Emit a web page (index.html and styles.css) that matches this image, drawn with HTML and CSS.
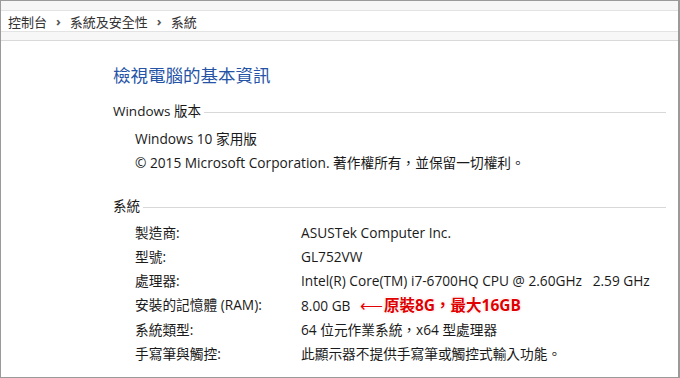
FILE: index.html
```html
<!DOCTYPE html>
<html lang="zh-Hant">
<head>
<meta charset="utf-8">
<link rel="stylesheet" href="styles.css">
</head>
<body>
<div class="frame">
  <div class="topstrip"></div>
  <div class="crumbs">
    <span>控制台</span><span class="sep">›</span><span>系統及安全性</span><span class="sep">›</span><span>系統</span>
  </div>
  <div class="substrip"></div>
  <div class="content">
    <h1 class="title">檢視電腦的基本資訊</h1>
    <div class="section-head"><span>Windows 版本</span><span class="rule"></span></div>
    <div class="edition">
      <div class="line">Windows 10 家用版</div>
      <div class="line">© 2015 Microsoft Corporation. 著作權所有，並保留一切權利。</div>
    </div>
    <div class="section-head sys"><span>系統</span><span class="rule"></span></div>
    <div class="grid">
      <div class="k">製造商:</div><div class="v">ASUSTek Computer Inc.</div>
      <div class="k">型號:</div><div class="v">GL752VW</div>
      <div class="k">處理器:</div><div class="v">Intel(R) Core(TM) i7-6700HQ CPU @ 2.60GHz&nbsp;&nbsp; 2.59 GHz</div>
      <div class="k">安裝的記憶體 (RAM):</div><div class="v">8.00 GB <span class="note"><span class="arrow">⟵</span>原裝8G，最大16GB</span></div>
      <div class="k">系統類型:</div><div class="v">64 位元作業系統，x64 型處理器</div>
      <div class="k">手寫筆與觸控:</div><div class="v">此顯示器不提供手寫筆或觸控式輸入功能。</div>
    </div>
  </div>
</div>
</body>
</html>
```
FILE: styles.css
```css
html, body { margin: 0; padding: 0; background: #fff; }
body { font-family: "Open Sans", "Noto Sans CJK TC", sans-serif; color: #1a1a1a; }
.frame {
  width: 677px; height: 376px;
  border: 1px solid #9a9a9a;
  border-bottom-width: 2px;
  border-right-width: 2px;
  overflow: hidden;
  background: #fff;
}
.topstrip { height: 9px; background: #f6f6f6; border-bottom: 1px solid #e3e3e3; }
.crumbs {
  height: 20px; background: #fff;
  display: flex; align-items: center;
  padding-left: 7px;
  font-size: 13px; color: #333;
  border-bottom: 1px solid #e3e3e3;
}
.crumbs .sep { margin: 0 9px; font-size: 13px; font-weight: bold; color: #555; }
.substrip { height: 8px; background: #f7f7f7; border-bottom: 1px solid #d9d9d9; }
.content { padding: 0 12px 0 112px; }
.title { margin: 22px 0 0; font-size: 17.5px; font-weight: normal; color: #2553a6; line-height: 24px; }
.section-head { display: flex; align-items: center; margin-top: 14px; font-size: 13.5px; line-height: 20px; color: #1a1a1a; }
.section-head .rule { flex: 1; height: 1px; background: #d8d8d8; margin-left: 3px; margin-top: 2px; }
.section-head.sys { margin-top: 21px; }
.edition { padding-left: 22px; margin-top: 6px; font-size: 13.7px; }
.line { line-height: 24px; }
.grid {
  display: grid; grid-template-columns: 166px 1fr;
  padding-left: 22px; margin-top: 5px;
  font-size: 13.7px; line-height: 24px;
}
.k { color: #1a1a1a; }
.note {
  color: #e00000; font-weight: bold; font-size: 15.5px; margin-left: 6px;
  text-shadow: 1px 0 0 #fff, -1px 0 0 #fff, 0 1px 0 #fff, 0 -1px 0 #fff, 0 0 2px #f66;
}
.arrow { font-weight: normal; margin-right: 1px; }
```
